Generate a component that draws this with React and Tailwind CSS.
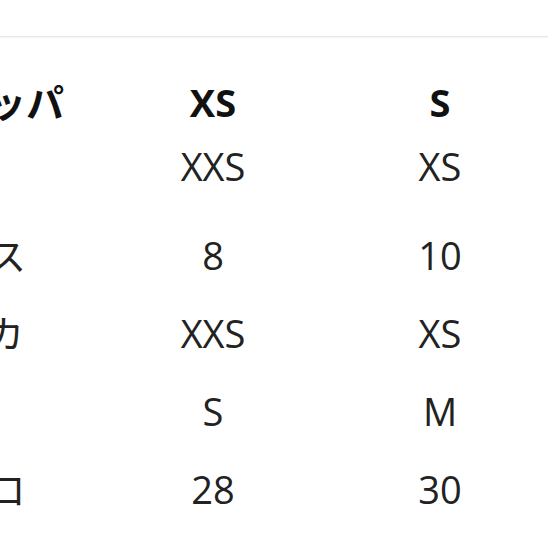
import React from "react";

const rows = [
  { label: "ヨーロッパ", xs: "XS", s: "S", head: true, h: "h-[64px]" },
  { label: "日本", xs: "XXS", s: "XS", h: "h-[64px] mb-[18px]" },
  { label: "イギリス", xs: "8", s: "10", h: "h-[78px]" },
  { label: "アメリカ", xs: "XXS", s: "XS", h: "h-[78px]" },
  { label: "中国", xs: "S", s: "M", h: "h-[78px]" },
  { label: "メキシコ", xs: "28", s: "30", h: "h-[78px]" },
];

const SizeRow = ({ row }) => {
  const weight = row.head ? "font-bold text-[#111]" : "font-normal text-[#222]";
  return (
    <div className={`grid grid-cols-[226px_226px_228px] items-center ${row.h}`}>
      <div className={`whitespace-nowrap leading-none ${weight}`}>{row.label}</div>
      <div className={`text-center leading-none ${weight}`}>{row.xs}</div>
      <div className={`text-center leading-none ${weight}`}>{row.s}</div>
    </div>
  );
};

export default function App() {
  return (
    <div
      className="w-[548px] h-[548px] overflow-hidden bg-white"
      style={{ fontFamily: '"Open Sans", "Noto Sans CJK JP", sans-serif' }}
    >
      {/* top divider */}
      <div className="h-[37px] border-b border-[#e6e6e6] shadow-[0_1px_2px_rgba(0,0,0,0.05)]"></div>

      {/* size table, label column runs off the left edge */}
      <div className="ml-[-126px] pt-[33px] text-[38px]">
        {rows.map((row, i) => (
          <SizeRow key={i} row={row} />
        ))}
      </div>
    </div>
  );
}
